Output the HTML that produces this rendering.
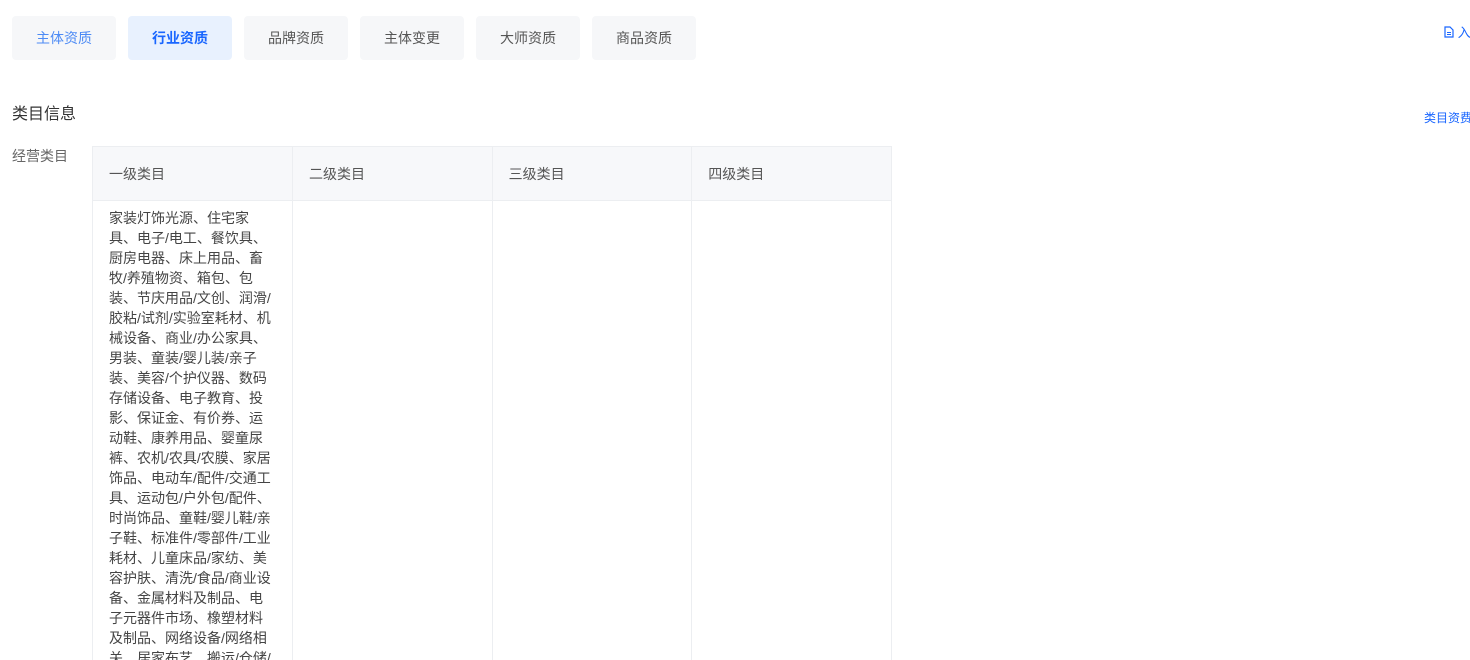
<!DOCTYPE html>
<html><head><meta charset="utf-8">
<style>
*{margin:0;padding:0;box-sizing:border-box}
html,body{width:1470px;height:660px;overflow:hidden}
body{background:#fff;font-family:"Liberation Sans","Noto Sans CJK SC",sans-serif;color:#333;position:relative}
.tab{position:absolute;top:16px;width:104px;height:44px;background:#f6f7f9;border-radius:4px;font-size:14px;line-height:44px;text-align:center;color:#555}
.t1{color:#4d8bf5}
.t2{background:#e8f1fe;color:#1966ff;font-weight:bold}
.title{position:absolute;left:12px;top:100px;font-size:16px;color:#333}
.lbl{position:absolute;left:12px;top:146px;font-size:14px;color:#666}
.link{position:absolute;font-size:12px;color:#1966ff;white-space:nowrap}
table{position:absolute;left:92px;top:146px;border-collapse:collapse;width:800px}
td,th{border:1px solid #eceef1;width:200px;text-align:left;vertical-align:top;font-weight:normal}
th{background:#f7f8fa;height:54px;padding:0 16px;font-size:14px;color:#555;vertical-align:middle}
td{height:480px;padding:7px 16px;font-size:14px;line-height:20px;color:#444;white-space:nowrap}
</style></head><body>
<div class="tab t1" style="left:12px">主体资质</div>
<div class="tab t2" style="left:128px">行业资质</div>
<div class="tab" style="left:244px">品牌资质</div>
<div class="tab" style="left:360px">主体变更</div>
<div class="tab" style="left:476px">大师资质</div>
<div class="tab" style="left:592px">商品资质</div>
<div class="link" style="top:22px;left:1444px;font-size:13px"><svg width="10" height="12" viewBox="0 0 10 12" style="vertical-align:-1px"><path d="M1 1h5l3 3v7H1z" fill="none" stroke="#1966ff" stroke-width="1.2"/><path d="M3 6.5h4M3 8.5h4" stroke="#1966ff"/></svg> 入</div>
<div class="link" style="top:109px;left:1424px">类目资费</div>
<div class="title">类目信息</div>
<div class="lbl">经营类目</div>
<table>
<tr><th>一级类目</th><th>二级类目</th><th>三级类目</th><th>四级类目</th></tr>
<tr><td>家装灯饰光源、住宅家<br>具、电子/电工、餐饮具、<br>厨房电器、床上用品、畜<br>牧/养殖物资、箱包、包<br>装、节庆用品/文创、润滑/<br>胶粘/试剂/实验室耗材、机<br>械设备、商业/办公家具、<br>男装、童装/婴儿装/亲子<br>装、美容/个护仪器、数码<br>存储设备、电子教育、投<br>影、保证金、有价券、运<br>动鞋、康养用品、婴童尿<br>裤、农机/农具/农膜、家居<br>饰品、电动车/配件/交通工<br>具、运动包/户外包/配件、<br>时尚饰品、童鞋/婴儿鞋/亲<br>子鞋、标准件/零部件/工业<br>耗材、儿童床品/家纺、美<br>容护肤、清洗/食品/商业设<br>备、金属材料及制品、电<br>子元器件市场、橡塑材料<br>及制品、网络设备/网络相<br>关、居家布艺、搬运/仓储/</td><td></td><td></td><td></td></tr>
</table>
</body></html>
